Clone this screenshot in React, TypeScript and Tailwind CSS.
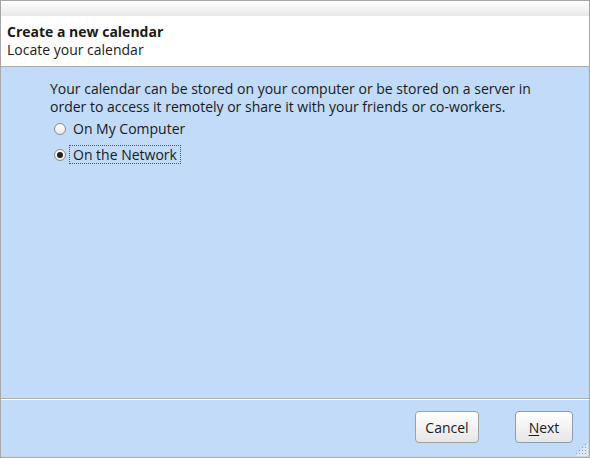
import React, { useState } from "react";

const font = { fontFamily: '"Open Sans", "DejaVu Sans", sans-serif' };

const Radio = ({ checked }: { checked: boolean }) => (
  <span className="flex h-[12px] w-[12px] shrink-0 items-center justify-center rounded-full border border-[#8a8a8a] bg-gradient-to-b from-white to-[#eaeaea]">
    {checked && <span className="h-[6px] w-[6px] rounded-full bg-[#222]" />}
  </span>
);

// resize grip dots, bottom-right corner
const Grip = () => {
  const dots: [number, number][] = [];
  for (let r = 0; r < 4; r++) {
    for (let c = 3 - r; c < 4; c++) dots.push([c * 3 + 1, r * 3 + 1]);
  }
  return (
    <svg className="absolute bottom-[1px] right-[1px]" width="13" height="13" viewBox="0 0 13 13">
      <polygon points="13,0 13,13 0,13" fill="#e4e8ee" />
      {dots.map(([x, y], i) => (
        <rect key={i} x={x} y={y} width="1" height="1" fill="#9a9a9a" />
      ))}
    </svg>
  );
};

export default function App() {
  const [choice, setChoice] = useState<"local" | "network">("network");

  return (
    <div
      className="relative flex h-[458px] w-[590px] flex-col border border-[#a6a6a6] bg-[#c1dbf8] text-[14px] text-[#1a1a1a]"
      style={font}
    >
      <div className="h-[15px] bg-gradient-to-b from-white to-[#e8e8e8]" />
      <div className="flex h-[51px] flex-col justify-center border-b border-[#a9a9a9] bg-white px-[6px] leading-[18px]">
        <div className="font-bold">Create a new calendar</div>
        <div>Locate your calendar</div>
      </div>

      <div className="flex flex-1 flex-col border-b border-[#adadad] pl-[49px] pt-[13px]">
        <p className="leading-[18px]">
          Your calendar can be stored on your computer or be stored on a server in
          <br />
          order to access it remotely or share it with your friends or co-workers.
        </p>
        <div className="mt-[2px] flex flex-col items-start gap-[5px] pl-[4px] leading-[17px]">
          <button className="flex items-center gap-[3px] py-[1px] text-left" onClick={() => setChoice("local")}>
            <Radio checked={choice === "local"} />
            <span className="border border-transparent px-[3px]">On My Computer</span>
          </button>
          <button className="flex items-center gap-[3px] py-[1px] text-left" onClick={() => setChoice("network")}>
            <Radio checked={choice === "network"} />
            <span className="border border-dotted border-[#555] px-[3px]">On the Network</span>
          </button>
        </div>
      </div>

      <div className="flex h-[58px] items-start justify-end gap-[36px] border-t border-white pr-[16px] pt-[11px]">
        <button className="h-[32px] w-[64px] rounded-[4px] border border-[#a0a0a0] bg-gradient-to-b from-white to-[#e6e6e6]">
          Cancel
        </button>
        <button className="h-[32px] w-[58px] rounded-[4px] border border-[#8c9bb0] bg-gradient-to-b from-white to-[#e6e6e6]">
          <span className="underline underline-offset-2">N</span>ext
        </button>
      </div>
      <Grip />
    </div>
  );
}
